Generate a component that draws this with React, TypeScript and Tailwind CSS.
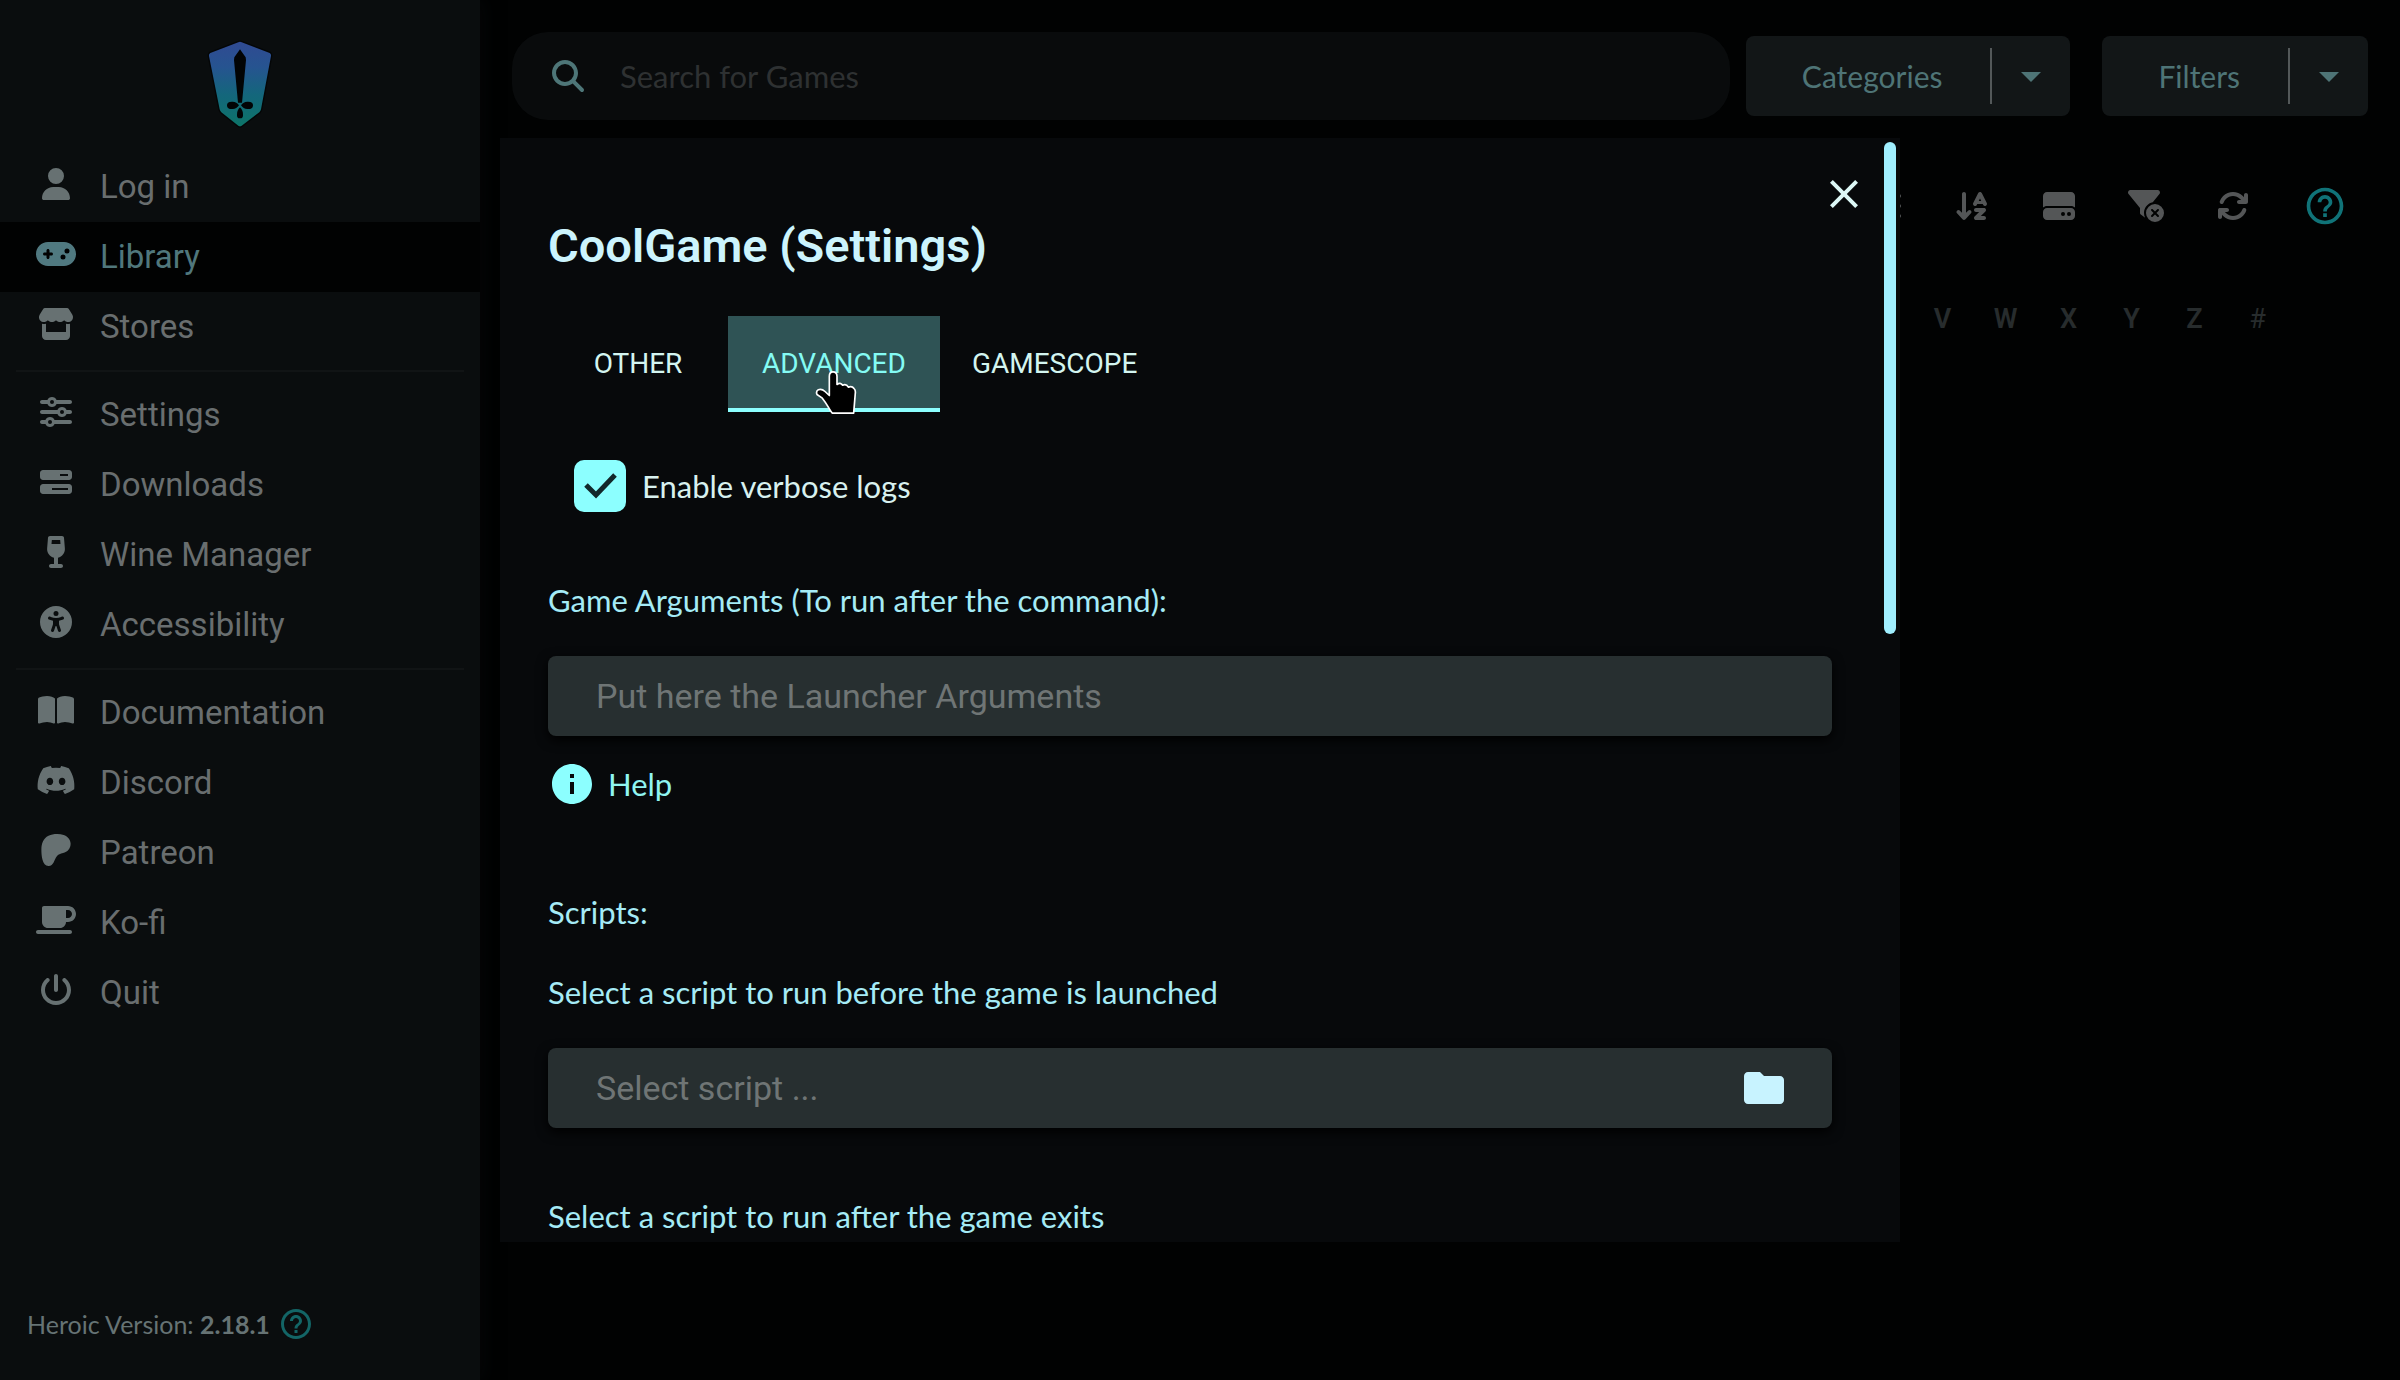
import type { ReactNode } from "react";
import type { IconType } from "react-icons";
import {
  FaArrowDownAZ,
  FaArrowsRotate,
  FaBarsProgress,
  FaBookOpen,
  FaDiscord,
  FaFilterCircleXmark,
  FaGamepad,
  FaHardDrive,
  FaList,
  FaMagnifyingGlass,
  FaMugSaucer,
  FaPatreon,
  FaPowerOff,
  FaSliders,
  FaStore,
  FaUniversalAccess,
  FaUser,
  FaWineGlass,
} from "react-icons/fa6";
import { MdArrowDropDown, MdClose, MdFolder, MdHelpOutline, MdInfo } from "react-icons/md";

type NavEntry = { label: string; icon: IconType; active?: boolean };

const navGroups: NavEntry[][] = [
  [
    { label: "Log in", icon: FaUser },
    { label: "Library", icon: FaGamepad, active: true },
    { label: "Stores", icon: FaStore },
  ],
  [
    { label: "Settings", icon: FaSliders },
    { label: "Downloads", icon: FaBarsProgress },
    { label: "Wine Manager", icon: FaWineGlass },
    { label: "Accessibility", icon: FaUniversalAccess },
  ],
  [
    { label: "Documentation", icon: FaBookOpen },
    { label: "Discord", icon: FaDiscord },
    { label: "Patreon", icon: FaPatreon },
    { label: "Ko-fi", icon: FaMugSaucer },
    { label: "Quit", icon: FaPowerOff },
  ],
];

const tools: { label: string; icon: IconType }[] = [
  { label: "List view", icon: FaList },
  { label: "Sort A to Z", icon: FaArrowDownAZ },
  { label: "Sort by installed", icon: FaHardDrive },
  { label: "Clear filters", icon: FaFilterCircleXmark },
  { label: "Refresh library", icon: FaArrowsRotate },
];

const letters = ["V", "W", "X", "Y", "Z", "#"];

function Logo() {
  return (
    <svg viewBox="45 24 210 276" className="h-[92px] w-[70px]" role="img" aria-label="Heroic">
      <defs>
        <linearGradient id="shield" x1="0" y1="0" x2="0" y2="1">
          <stop offset="0" stopColor="#304a92" />
          <stop offset="0.3" stopColor="#265490" />
          <stop offset="0.62" stopColor="#14667c" />
          <stop offset="1" stopColor="#0d7468" />
        </linearGradient>
      </defs>
      <path
        d="M145 37Q150 34 155 37L239 69Q244 72 243 78L213 238Q212 243 208 247L155 287Q150 291 145 287L94 247Q90 243 89 238L57 78Q56 72 61 69Z"
        fill="url(#shield)"
        stroke="#040607"
        strokeWidth="8"
        paintOrder="stroke"
      />
      <g fill="#020405">
        <path d="M150 58Q146 64 133 82L132 90L144 218H156L168 90L167 82Q154 64 150 58Z" />
        <path d="M147 226Q140 215 128 215Q110 214 111 227Q112 238 128 237Q140 237 147 226Z" />
        <path d="M153 226Q160 215 172 215Q190 214 189 227Q188 238 172 237Q160 237 153 226Z" />
        <path d="M150 232Q159 240 159 254Q160 265 150 265Q140 265 141 254Q141 240 150 232Z" />
      </g>
    </svg>
  );
}

function NavLink({ label, icon: Icon, active }: NavEntry) {
  return (
    <a
      href="#"
      aria-current={active ? "page" : undefined}
      className={
        active
          ? "flex h-[70px] items-center gap-5 bg-[#010202] px-8 text-[#50777c]"
          : "flex h-[70px] items-center gap-5 px-8 text-[#696e6f]"
      }
    >
      <span
        className={
          active
            ? "flex w-12 shrink-0 justify-center pb-1.5 text-[#507980]"
            : "flex w-12 shrink-0 justify-center pb-1.5 text-[#677172]"
        }
      >
        <Icon className="h-8 w-10" />
      </span>
      <span className="font-['Roboto',sans-serif] text-[33px] leading-10">{label}</span>
    </a>
  );
}

function Sidebar() {
  return (
    <aside className="flex w-1/5 shrink-0 flex-col bg-[#0a0d0e] shadow-[4px_0_16px_#050607]">
      <div className="flex justify-center pt-[38px] pb-[22px]">
        <Logo />
      </div>
      <nav className="flex flex-col">
        {navGroups.map((group, i) => (
          <div key={i}>
            {i > 0 && <hr className="mx-4 my-2 border-t-2 border-[#111415]" />}
            {group.map((entry) => (
              <NavLink key={entry.label} {...entry} />
            ))}
          </div>
        ))}
      </nav>
      <div className="mt-auto flex items-center gap-2 pb-9 pl-[27px] font-['Lato',sans-serif] text-[25px] leading-10 text-[#667374]">
        <span>
          Heroic Version: <strong className="font-bold">2.18.1</strong>
        </span>
        <button type="button" aria-label="Version help" className="text-[#136566]">
          <MdHelpOutline className="size-9" />
        </button>
      </div>
    </aside>
  );
}

function SplitButton({ label }: { label: string }) {
  return (
    <div className="flex h-20 items-center rounded-lg bg-[#121617] text-[#4e7476]">
      <button type="button" className="h-full pr-12 pl-14 text-[30px] leading-10">
        {label}
      </button>
      <span className="h-14 w-0.5 bg-[#535859]" />
      <button type="button" aria-label={`${label} menu`} className="flex h-full w-[78px] items-center justify-center">
        <MdArrowDropDown className="size-12" />
      </button>
    </div>
  );
}

function LibraryPage() {
  return (
    <main className="flex min-w-0 flex-1 flex-col font-['Lato',sans-serif]">
      <header className="flex items-center gap-8 px-8 pt-8">
        <div className="flex min-w-0 flex-1 items-center gap-4">
          <label className="flex h-[88px] min-w-0 flex-1 items-center gap-9 rounded-[36px] bg-[#090b0c] pl-10 text-[#4e7678]">
            <FaMagnifyingGlass className="size-8 shrink-0" />
            <input
              type="search"
              aria-label="Search for Games"
              placeholder="Search for Games"
              className="min-w-0 flex-1 bg-transparent text-[31px] leading-10 outline-none placeholder:text-[#2e3132]"
            />
          </label>
          <SplitButton label="Categories" />
        </div>
        <SplitButton label="Filters" />
      </header>
      <div className="flex items-center justify-end pt-16 pr-[26px] text-[#545657]">
        {tools.map(({ label, icon: Icon }) => (
          <button key={label} type="button" aria-label={label} className="flex w-[87px] justify-center">
            <Icon className="h-8 w-10" />
          </button>
        ))}
        <button type="button" aria-label="Library help" className="flex w-[98px] justify-center text-[#107378]">
          <MdHelpOutline className="size-11" />
        </button>
      </div>
      <div className="flex justify-end pt-[71px] pr-[111px] font-['Roboto',sans-serif] text-[27px] leading-10 text-[#272c2d]">
        {letters.map((letter) => (
          <button
            key={letter}
            type="button"
            className={letter === "#" ? "w-[63px] font-normal" : "w-[63px] font-semibold"}
          >
            {letter}
          </button>
        ))}
      </div>
    </main>
  );
}

function HandCursor() {
  return (
    <svg
      viewBox="282 208 126 134"
      className="pointer-events-none absolute top-[54px] left-[87px] h-[45px] w-[42px]"
      aria-hidden="true"
    >
      <path
        d="M325 226Q325 213 336 213Q348 213 348 226V251Q358 243 365 253Q376 248 382 259Q393 254 399 263Q404 268 403 276L398 337H334Q330 333 322 319Q312 302 304 292L288 281Q284 271 292 267Q302 263 312 272L325 284Z"
        fill="#000"
        stroke="#fff"
        strokeWidth="5"
        strokeLinejoin="round"
      />
    </svg>
  );
}

function Tab({ label, selected, children }: { label: string; selected?: boolean; children?: ReactNode }) {
  return (
    <button
      type="button"
      role="tab"
      aria-selected={Boolean(selected)}
      className={
        selected
          ? "relative h-24 min-w-[180px] border-b-4 border-[#8cffff] bg-[#2f5355] px-[34px] pt-1 text-[#84fbf4]"
          : "h-24 min-w-[180px] px-8 text-[#d3f5f0]"
      }
    >
      {label}
      {children}
    </button>
  );
}

function FieldInput({ id, placeholder, children }: { id: string; placeholder: string; children?: ReactNode }) {
  return (
    <div className="mt-9 flex h-20 items-center rounded-lg bg-[#272f30] pr-11 pl-12 shadow-[0_4px_12px_#000000]">
      <input
        id={id}
        type="text"
        placeholder={placeholder}
        className="min-w-0 flex-1 bg-transparent font-['Roboto',sans-serif] text-[34px] leading-10 outline-none placeholder:text-[#6f7575]"
      />
      {children}
    </div>
  );
}

function SettingsDialog() {
  return (
    <div className="absolute inset-0 flex items-center justify-center">
      <section
        role="dialog"
        aria-labelledby="dialog-title"
        className="relative h-4/5 w-7/12 overflow-hidden bg-[#07090b] pt-[76px] pr-[68px] pl-12 font-['Lato',sans-serif] text-[31px] leading-10 text-[#a5ebf6]"
      >
        <button type="button" aria-label="Close" className="absolute top-8 right-8 text-[#dcf7f6]">
          <MdClose className="size-12" />
        </button>
        <span className="absolute top-1 right-1 h-[492px] w-3 rounded-full bg-[#a0efff]" />
        <h1
          id="dialog-title"
          className="font-['Roboto',sans-serif] text-[47px] leading-16 font-semibold text-[#ccf4fd]"
        >
          CoolGame (Settings)
        </h1>
        <div role="tablist" className="mt-[38px] flex font-['Roboto',sans-serif] text-[28px]">
          <Tab label="OTHER" />
          <Tab label="ADVANCED" selected>
            <HandCursor />
          </Tab>
          <Tab label="GAMESCOPE" />
        </div>
        <label className="mt-12 ml-[26px] flex w-fit items-center gap-4 text-[#d8f1ef]">
          <span className="relative size-[52px]">
            <input type="checkbox" defaultChecked className="size-full appearance-none rounded-[10px] bg-[#8cffff]" />
            <svg viewBox="0 0 52 52" className="pointer-events-none absolute inset-0" aria-hidden="true">
              <path d="M12 25L22 35L41 15" fill="none" stroke="#12282b" strokeWidth="5" />
            </svg>
          </span>
          Enable verbose logs
        </label>
        <label htmlFor="game-arguments" className="mt-[68px] block">
          Game Arguments (To run after the command):
        </label>
        <FieldInput id="game-arguments" placeholder="Put here the Launcher Arguments" />
        <button type="button" className="mt-6 flex items-center gap-3 text-[#90f5f1]">
          <MdInfo className="size-12 text-[#8cffff]" />
          Help
        </button>
        <h2 className="mt-[84px]">Scripts:</h2>
        <label htmlFor="before-script" className="mt-10 block">
          Select a script to run before the game is launched
        </label>
        <FieldInput id="before-script" placeholder="Select script ...">
          <button type="button" aria-label="Browse for script" className="text-[#c8f3ff]">
            <MdFolder className="size-12" />
          </button>
        </FieldInput>
        <p className="mt-[68px]">Select a script to run after the game exits</p>
      </section>
    </div>
  );
}

export default function App() {
  return (
    <div className="relative flex min-h-screen bg-[#010202]">
      <Sidebar />
      <LibraryPage />
      <SettingsDialog />
    </div>
  );
}
